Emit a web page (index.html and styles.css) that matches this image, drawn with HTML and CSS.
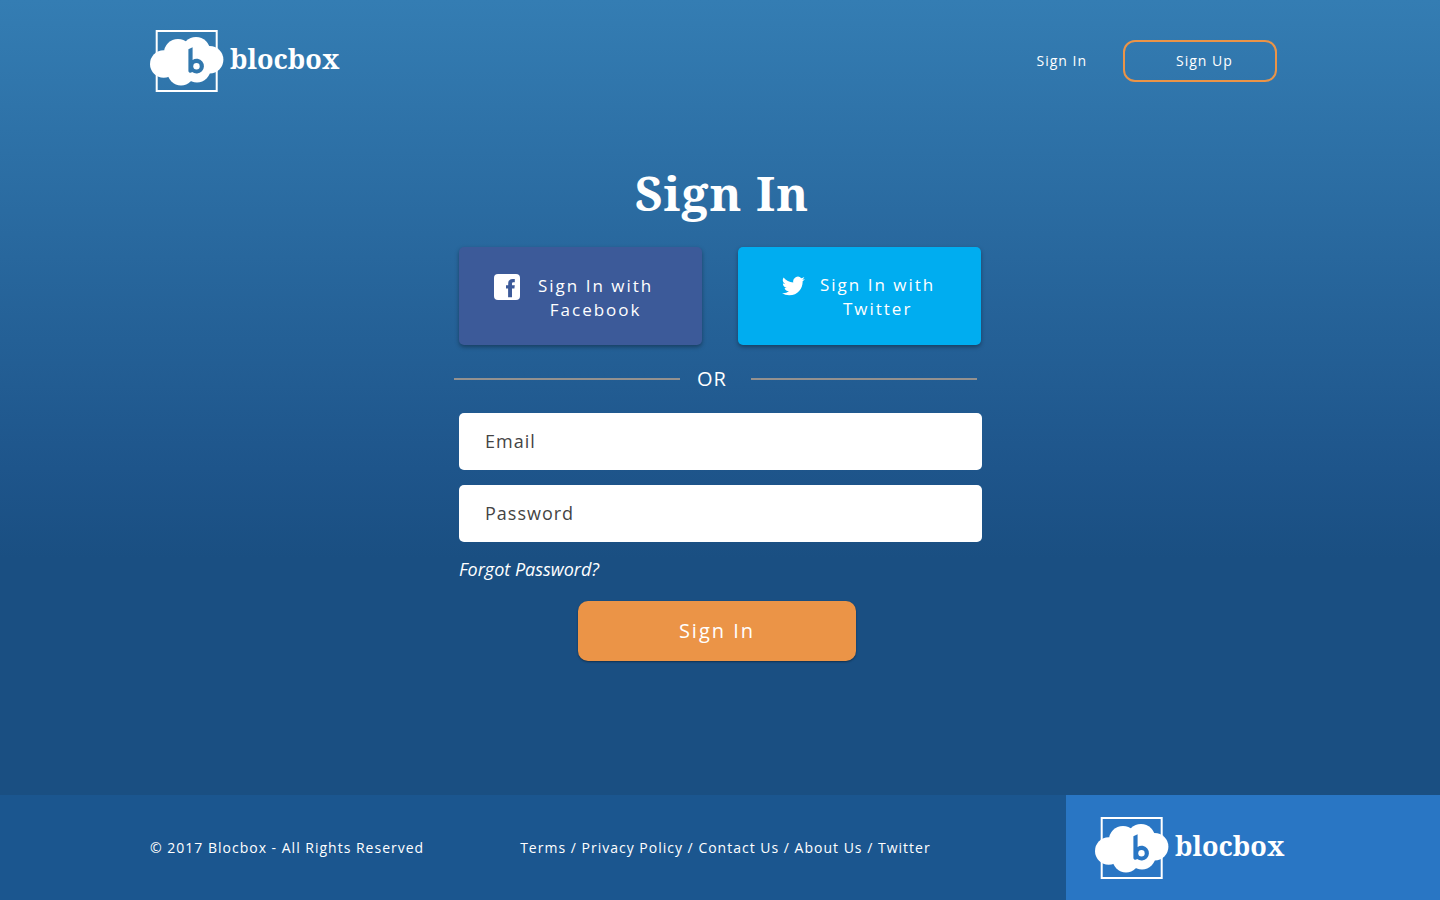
FILE: index.html
```html
<!DOCTYPE html>
<html lang="en">
<head>
<meta charset="utf-8">
<title>Blocbox - Sign In</title>
<meta name="viewport" content="width=device-width, initial-scale=1">
<link rel="stylesheet" href="styles.css">
</head>
<body>
<svg class="defs" aria-hidden="true">
  <symbol id="cloud" viewBox="0 0 74 62">
    <path fill="none" stroke="currentColor" stroke-width="2" d="M6.700 1h60v60h-60z"/>
    <mask id="letter">
      <path fill="#fff" d="M0 0h74v62H0z"/>
      <path fill="#000" d="M38.400 19.300l4.200-2v12.600a7.400 7.400 0 1 1-.5 12.200c-1.300 1.300-3.700.7-3.700-1.400z"/>
      <circle fill="#fff" cx="46.500" cy="36.300" r="3.200"/>
    </mask>
    <g fill="currentColor" mask="url(#letter)">
      <circle cx="13.700" cy="34" r="13.700"/>
      <circle cx="28" cy="23" r="14"/>
      <circle cx="46" cy="21" r="14"/>
      <circle cx="59.700" cy="29.700" r="13.700"/>
      <circle cx="31" cy="42" r="13.500"/>
      <circle cx="47" cy="39" r="13.500"/>
      <path d="M15 22h45v20H15z"/>
    </g>
  </symbol>
</svg>

<header class="header">
  <a class="logo" href="#"><svg class="logo-mark" aria-hidden="true"><use href="#cloud"/></svg><span>blocbox</span></a>
  <nav class="nav">
    <a href="#">Sign In</a>
    <a class="signup" href="#">Sign Up</a>
  </nav>
</header>

<main class="main">
  <h1 class="title">Sign In</h1>
  <form class="form">
    <div class="social">
      <button class="social-button facebook" type="button">
        <svg class="facebook-icon" viewBox="0 0 26 26" aria-hidden="true"><rect width="26" height="26" rx="4" fill="#fff"/><path fill="#3c5a99" d="M12 11.200h2.200V9.800c0-3.300 1.600-4.900 4.500-4.900h2.100v3.400h-1.300c-1.200 0-1.500.6-1.500 1.500v1.400h2.800l-.4 3.300H18V23.200h-3.900v-8.700H12z"/></svg>
        <span>Sign In with<br>Facebook</span>
      </button>
      <button class="social-button twitter" type="button">
        <svg class="twitter-icon" viewBox="0 2 24 20" aria-hidden="true"><path fill="#fff" d="M23.950 4.570a10 10 0 0 1-2.820.770 4.960 4.960 0 0 0 2.160-2.720c-.950.550-2 .950-3.130 1.180a4.920 4.920 0 0 0-8.380 4.480C7.690 8.100 4.070 6.130 1.640 3.160a4.920 4.920 0 0 0 1.520 6.570 4.900 4.900 0 0 1-2.230-.610v.060a4.920 4.920 0 0 0 3.950 4.830 5 5 0 0 1-2.210.080 4.940 4.940 0 0 0 4.600 3.420A9.870 9.870 0 0 1 0 19.540a13.940 13.940 0 0 0 7.550 2.210c9.050 0 14-7.500 14-13.980 0-.210 0-.420-.020-.630a9.940 9.940 0 0 0 2.420-2.570z"/></svg>
        <span>Sign In with<br>Twitter</span>
      </button>
    </div>
    <div class="divider"><span>OR</span></div>
    <input class="field" type="email" aria-label="Email" placeholder="Email">
    <input class="field" type="password" aria-label="Password" placeholder="Password">
    <a class="forgot" href="#">Forgot Password?</a>
    <button class="submit" type="submit">Sign In</button>
  </form>
</main>

<footer class="footer">
  <div class="footer-info">
    <p class="copyright">© 2017 Blocbox - All Rights Reserved</p>
    <nav class="footer-links">
      <a href="#">Terms</a> / <a href="#">Privacy Policy</a> / <a href="#">Contact Us</a> / <a href="#">About Us</a> / <a href="#">Twitter</a>
    </nav>
  </div>
  <div class="footer-brand">
    <a class="logo" href="#"><svg class="logo-mark" aria-hidden="true"><use href="#cloud"/></svg><span>blocbox</span></a>
  </div>
</footer>
</body>
</html>
```

FILE: styles.css
```css
* {
  box-sizing: border-box;
}

body {
  display: flex;
  flex-direction: column;
  min-height: 100vh;
  margin: 0;
  color: #fff;
  font-family: "Open Sans", "Noto Sans", sans-serif;
  font-size: 14px;
  line-height: 20px;
  letter-spacing: 1px;
  background: linear-gradient(#347db3 0%, #1e558b 52%, #1a4f82 62%, #1a4f82 100%);
}

a {
  color: inherit;
  text-decoration: none;
}

button,
input {
  font: inherit;
  letter-spacing: inherit;
  border: 0;
}

.defs {
  position: absolute;
  width: 0;
  height: 0;
}

.header {
  display: flex;
  align-items: center;
  justify-content: space-between;
  padding: 30px 163px 0 150px;
}

.logo {
  display: flex;
  align-items: center;
  gap: 6px;
  font: bold 27px/32px "Noto Serif", "Droid Serif", "DejaVu Serif Condensed", "DejaVu Serif", serif;
  letter-spacing: 0;
}

.logo span {
  padding-bottom: 4px;
}

.logo-mark {
  width: 74px;
  height: 62px;
}

.nav {
  display: flex;
  align-items: center;
  gap: 36px;
}

.signup {
  width: 154px;
  padding: 9px 0 9px 51px;
  border: 2px solid #eb9447;
  border-radius: 12px;
}

.main {
  flex: 1;
  width: 100%;
  max-width: 524px;
  margin: 0 auto;
  padding-top: 69px;
}

.title {
  margin: 0 0 22px;
  padding-left: 4px;
  text-align: center;
  font: bold 48px/64px "Noto Serif", "Droid Serif", "DejaVu Serif Condensed", "DejaVu Serif", serif;
  letter-spacing: 1px;
}

.form {
  display: flex;
  flex-direction: column;
  padding-left: 1px;
}

.social {
  display: grid;
  grid-template-columns: 1fr 1fr;
  gap: 36px;
  padding-right: 1px;
}

.social-button {
  display: flex;
  align-items: flex-start;
  height: 98px;
  padding: 27px 0 0 35px;
  color: #fff;
  font-size: 17px;
  line-height: 24px;
  letter-spacing: 2px;
  border-radius: 5px;
  box-shadow: 0 2px 4px rgba(0, 0, 0, 0.35);
}

.facebook {
  gap: 18px;
  background: #3c5a99;
}

.twitter {
  gap: 15px;
  padding-top: 26px;
  padding-left: 44px;
  background: #00adf0;
}

.facebook-icon {
  width: 26px;
  height: 26px;
}

.twitter-icon {
  width: 23px;
  height: 26px;
}

.divider {
  display: flex;
  align-items: center;
  gap: 17px;
  margin: 20px 5px 20px -5px;
  font-size: 20px;
  line-height: 28px;
}

.divider::before,
.divider::after {
  content: "";
  flex: 1;
  height: 2px;
  background: #94918f;
}

.divider span {
  padding-right: 7px;
}

.field {
  width: 100%;
  height: 57px;
  margin-bottom: 15px;
  padding: 0 26px 2px;
  color: #444;
  font-size: 18px;
  background: #fff;
  border-radius: 5px;
}

.field::placeholder {
  color: #444;
  opacity: 1;
}

.forgot {
  align-self: flex-start;
  margin: -1px 0 19px;
  font-size: 18px;
  font-style: italic;
  line-height: 26px;
  letter-spacing: 0;
}

.submit {
  align-self: center;
  width: 278px;
  height: 60px;
  margin-right: 7px;
  color: #fff;
  font-size: 20px;
  letter-spacing: 2px;
  background: #eb9447;
  border-radius: 10px;
  box-shadow: 0 1px 2px rgba(0, 0, 0, 0.4);
}

.footer {
  display: grid;
  grid-template-columns: 1fr 374px;
  min-height: 105px;
}

.footer-info {
  display: flex;
  align-items: center;
  gap: 96px;
  padding-left: 150px;
  background: #1b568f;
}

.copyright {
  margin: 0;
}

.footer-brand {
  display: flex;
  align-items: center;
  padding-left: 29px;
  background: #2976c4;
}
```
